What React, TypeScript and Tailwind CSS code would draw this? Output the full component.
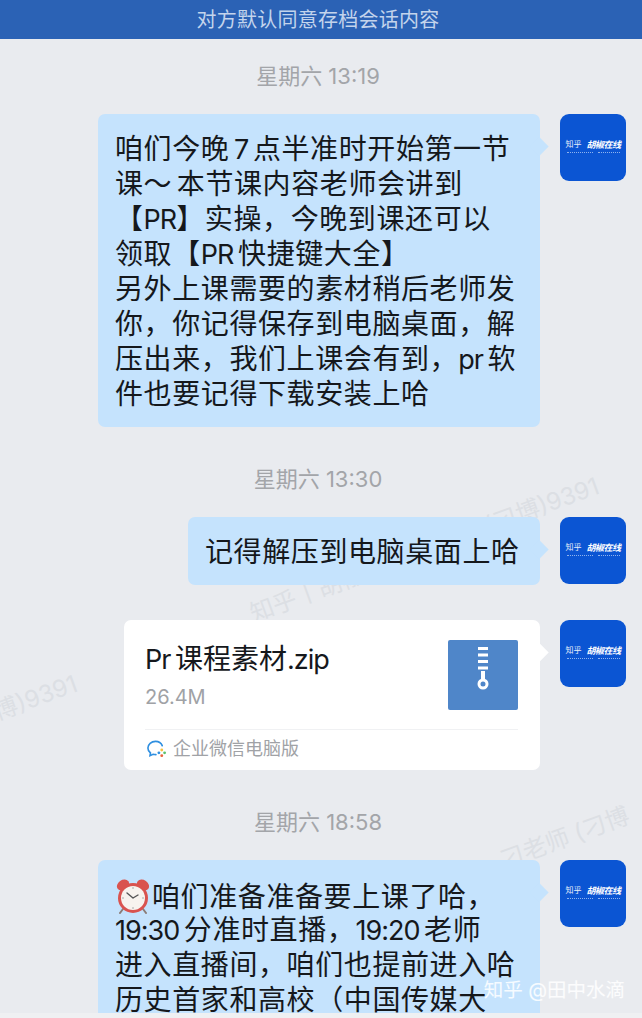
const fontStack = { fontFamily: '"Inter", "Noto Sans CJK SC", sans-serif' }

function Avatar() {
  return (
    <div className="flex h-[67px] w-[66px] shrink-0 flex-col items-center justify-center rounded-[9px] bg-[#0b55d3] pb-[3px]">
      <div className="flex items-center gap-[5px] leading-none text-white">
        <span className="text-[8px] opacity-90">知乎</span>
        <span className="text-[9px] font-bold italic tracking-[-0.5px]">胡椒在线</span>
      </div>
      <div className="mt-[3px] flex gap-[5px]">
        <div className="h-px w-[26px] border-t border-dotted border-[#8fb3ee]" />
        <div className="h-px w-[22px] border-t border-dotted border-[#8fb3ee]" />
      </div>
    </div>
  )
}

function Arrow({ color }: { color: string }) {
  return <div className={`absolute right-[-6px] top-[26px] h-[13px] w-[13px] rotate-45 ${color}`} />
}

// latin runs sit tighter than the cjk glyphs around them
function Rich({ text }: { text: string }) {
  return (
    <>
      {text.split(/([\x20-\x7e]+)/).map((part, i) =>
        /[\x20-\x7e]/.test(part) ? (
          <span key={i} className="text-[27px] tracking-[-1px] [word-spacing:-2px]">
            {part}
          </span>
        ) : (
          part
        ),
      )}
    </>
  )
}

function Bubble({ lines, clock, className }: { lines: string[]; clock?: boolean; className: string }) {
  return (
    <div className={`relative rounded-[7px] bg-[#c5e3fd] pb-[15px] pl-[17px] pt-[18px] text-[28px] leading-[35px] tracking-[0.6px] text-[#15181c] ${className}`}>
      <Arrow color="bg-[#c5e3fd]" />
      {lines.map((line, i) => (
        <div key={i} className="relative h-[35px] whitespace-nowrap">
          {clock && i === 0 && <ClockEmoji />}
          <Rich text={line} />
        </div>
      ))}
    </div>
  )
}

function ClockEmoji() {
  return (
    <svg viewBox="0 0 36 36" className="mr-px inline-block h-[36px] w-[36px] align-[-7px]">
      <ellipse cx="8" cy="7" rx="6.5" ry="5" fill="#d9534f" transform="rotate(-35 8 7)" />
      <ellipse cx="28" cy="7" rx="6.5" ry="5" fill="#d9534f" transform="rotate(35 28 7)" />
      <path d="M8 31l-3 4M28 31l3 4" stroke="#8b7d78" strokeWidth="2" strokeLinecap="round" />
      <circle cx="18" cy="20" r="15" fill="#d9534f" />
      <circle cx="18" cy="20" r="12" fill="#f7f3ee" />
      <path d="M18 20l-6-5M18 20l5-3" stroke="#555" strokeWidth="1.4" strokeLinecap="round" />
      <path d="M18 9v2M18 29v2M7 20h2M27 20h2" stroke="#aaa" strokeWidth="1" />
    </svg>
  )
}

function TimeLabel({ text }: { text: string }) {
  return <div className="h-[26px] pr-[6px] text-center text-[22px] leading-[26px] text-[#a3a5a9]">{text}</div>
}

function ZipIcon() {
  return (
    <div className="flex h-[70px] w-[70px] shrink-0 justify-center rounded-[2px] bg-[#4f86c9] pt-[6px]">
      <svg viewBox="0 0 12 46" className="h-[46px] w-[12px]" fill="none" stroke="#fff">
        <path d="M1 2.500h10M1 9h10M1 15.500h10M1 22h10" strokeWidth="3" />
        <path d="M6 25v8" strokeWidth="4" />
        <circle cx="6" cy="38" r="4" strokeWidth="3" />
      </svg>
    </div>
  )
}

function WeComIcon() {
  return (
    <svg viewBox="0 0 22 20" className="h-[20px] w-[21px]" fill="none">
      <path d="M17 6.500C15.800 3.400 13 2 10 2 5.500 2 2 5 2 9c0 2.200 1 4 2.700 5.200L4.200 17l3.200-1.500c1 .3 2 .4 3 .4" stroke="#2f8fe0" strokeWidth="1.700" strokeLinecap="round" />
      <circle cx="16.500" cy="11" r="1.500" fill="#f5c242" />
      <circle cx="19.500" cy="14" r="1.500" fill="#5cc26b" />
      <circle cx="13.500" cy="14" r="1.500" fill="#2f8fe0" />
      <circle cx="16.500" cy="17" r="1.500" fill="#e8643c" />
    </svg>
  )
}

function Watermark({ text, className }: { text: string; className: string }) {
  return <div className={`absolute -rotate-[20deg] whitespace-nowrap text-[24px] text-[#dcdfe4] ${className}`}>{text}</div>
}

export default function App() {
  return (
    <div className="relative h-[1018px] w-[642px] overflow-hidden bg-[#e9ebef]" style={fontStack}>
      <Watermark text="(刁博)9391" className="left-[482px] top-[488px]" />
      <Watermark text="知乎丨胡椒在线" className="left-[246px] top-[568px]" />
      <Watermark text="博)9391" className="left-[-8px] top-[680px]" />
      <Watermark text="刁老师 (刁博" className="left-[497px] top-[820px]" />

      <div className="flex h-[39px] items-center justify-center bg-[#2b62b5] pr-[6px] text-[20px] tracking-[0.25px] text-[#c3d4ec]">对方默认同意存档会话内容</div>

      <div className="relative mt-[24px]">
        <TimeLabel text="星期六 13:19" />
      </div>
      <div className="relative mt-[25px] flex items-start justify-end gap-[20px] pr-[16px]">
        <Bubble
          className="w-[442px]"
          lines={[
            '咱们今晚 7 点半准时开始第一节',
            '课～ 本节课内容老师会讲到',
            '【PR】实操，今晚到课还可以',
            '领取【PR 快捷键大全】',
            '另外上课需要的素材稍后老师发',
            '你，你记得保存到电脑桌面，解',
            '压出来，我们上课会有到，pr 软',
            '件也要记得下载安装上哈',
          ]}
        />
        <Avatar />
      </div>

      <div className="relative mt-[39px]">
        <TimeLabel text="星期六 13:30" />
      </div>
      <div className="relative mt-[25px] flex items-start justify-end gap-[20px] pr-[16px]">
        <Bubble className="w-[352px]" lines={['记得解压到电脑桌面上哈']} />
        <Avatar />
      </div>

      <div className="relative mt-[35px] flex items-start justify-end gap-[20px] pr-[16px]">
        <div className="relative h-[150px] w-[416px] rounded-[7px] bg-white pl-[21px] pr-[22px] pt-[20px]">
          <Arrow color="bg-white" />
          <div className="flex items-start justify-between">
            <div>
              <div className="mt-[2px] text-[28px] leading-[34px] text-[#15181c]">
                <Rich text="Pr " />
                课程素材
                <Rich text=".zip" />
              </div>
              <div className="mt-[7px] text-[20px] leading-[26px] text-[#a0a2a6]">26.4M</div>
            </div>
            <ZipIcon />
          </div>
          <div className="mt-[19px] border-t border-[#f0f1f3]" />
          <div className="mt-[7px] flex items-center gap-[6px] pl-px text-[18px] leading-[24px] text-[#a0a2a6]">
            <WeComIcon />
            企业微信电脑版
          </div>
        </div>
        <Avatar />
      </div>

      <div className="relative mt-[39px]">
        <TimeLabel text="星期六 18:58" />
      </div>
      <div className="relative mt-[25px] flex items-start justify-end gap-[20px] pr-[16px]">
        <Bubble
          clock
          className="w-[442px]"
          lines={['咱们准备准备要上课了哈，', '19:30 分准时直播，19:20 老师', '进入直播间，咱们也提前进入哈', '历史首家和高校（中国传媒大']}
        />
        <Avatar />
      </div>

      <div className="absolute bottom-[16px] right-[17px] text-[19.5px] leading-[24px] text-white/85">知乎 @田中水滴</div>
      <div className="absolute bottom-0 left-0 h-[5px] w-full bg-[#eff0f2]" />
    </div>
  )
}
